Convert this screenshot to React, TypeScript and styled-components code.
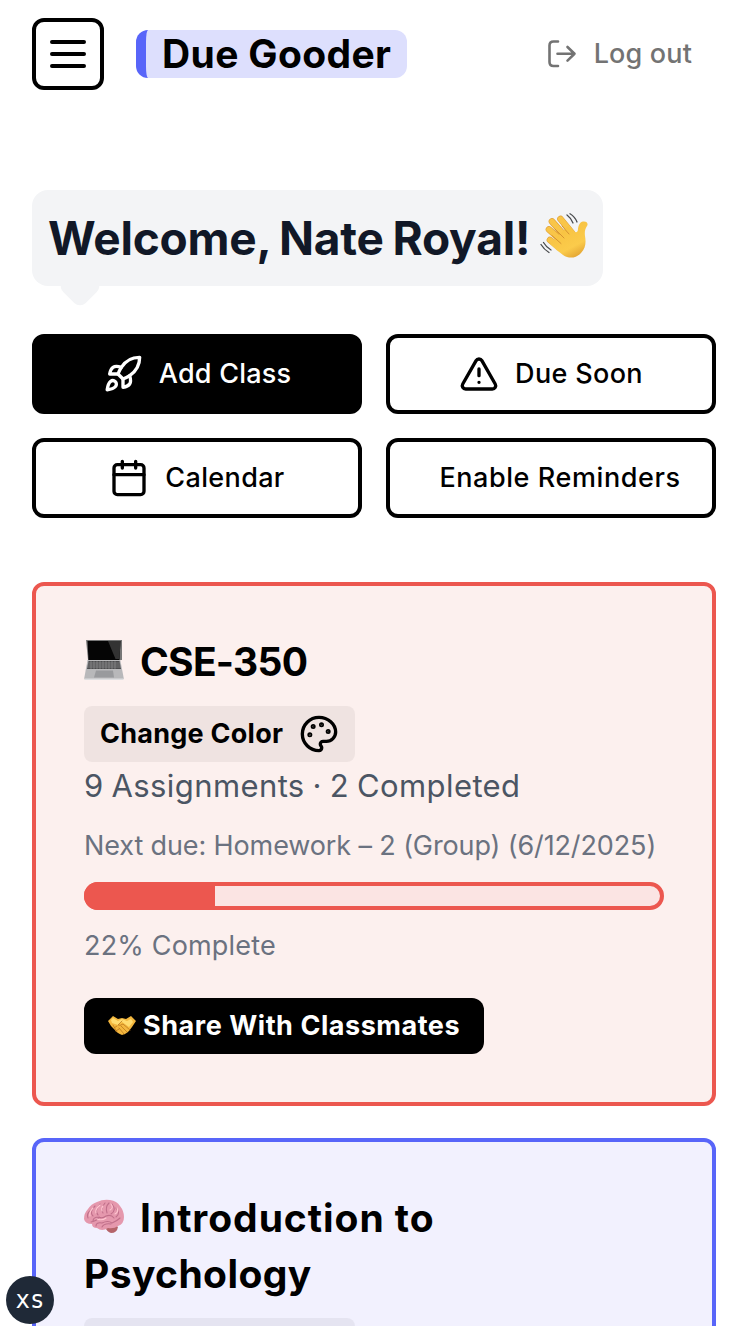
import React from "react";
import styled, { createGlobalStyle } from "styled-components";

const GlobalStyle = createGlobalStyle`
  *, *::before, *::after { box-sizing: border-box; }
  html, body { margin: 0; padding: 0; background: #fff; }
  body { font-family: Inter, "Liberation Sans", sans-serif; color: #000; }
  button { font-family: inherit; margin: 0; cursor: pointer; }
  h1, h2, p { margin: 0; }
  svg { display: block; flex: none; }
`;

const Page = styled.div`
  position: relative;
  height: 1326px;
  overflow: hidden;
  padding: 18px 28px 0 32px;
`;

const Header = styled.header`
  display: flex;
  align-items: center;
  height: 72px;
`;

const MenuButton = styled.button`
  width: 72px;
  height: 72px;
  border: 4px solid #000;
  border-radius: 12px;
  background: #fff;
  display: flex;
  align-items: center;
  justify-content: center;
  padding: 0;
`;

const Brand = styled.div`
  margin-left: 32px;
  width: 271px;
  height: 48px;
  border-radius: 12px;
  border-left: 10px solid #5865f9;
  background: #dddffd;
  padding-left: 16px;
  font-size: 39px;
  font-weight: 700;
  line-height: 47px;
  white-space: nowrap;
`;

const LogoutButton = styled.button`
  margin-left: auto;
  margin-right: 24px;
  border: 0;
  padding: 0;
  background: none;
  color: #737373;
  display: flex;
  align-items: center;
  gap: 17px;
  font-size: 27px;
  font-weight: 500;
  line-height: 40px;
`;

const Label = styled.span<{ $spacing?: number; $words?: number }>`
  letter-spacing: ${(p) => p.$spacing ?? 0}px;
  word-spacing: ${(p) => p.$words ?? 0}px;
  white-space: nowrap;
`;

const Bubble = styled.div`
  position: relative;
  margin-top: 100px;
  width: 571px;
  height: 96px;
  border-radius: 16px;
  background: #f3f4f6;
  padding: 0 15px 0 16px;
  display: flex;
  align-items: center;
  justify-content: space-between;

  &::after {
    content: "";
    position: absolute;
    left: 32px;
    bottom: -16px;
    width: 32px;
    height: 32px;
    border-radius: 8px;
    background: #f3f4f6;
    transform: rotate(45deg);
  }

  > svg {
    margin-bottom: 3px;
  }
`;

const Greeting = styled.h1`
  color: #111827;
  font-size: 46px;
  font-weight: 700;
  line-height: 56px;
`;

const Actions = styled.div`
  margin-top: 48px;
  display: grid;
  grid-template-columns: 1fr 1fr;
  gap: 24px;
`;

const ActionButton = styled.button<{ $filled?: boolean; $indent?: boolean }>`
  height: 80px;
  border: 4px solid #000;
  border-radius: 12px;
  background: ${(p) => (p.$filled ? "#000" : "#fff")};
  color: ${(p) => (p.$filled ? "#fff" : "#000")};
  display: flex;
  align-items: center;
  justify-content: center;
  gap: 16px;
  padding: 0 0 0 ${(p) => (p.$indent ? 18 : 0)}px;
  font-size: 27px;
  font-weight: 500;

  ${Label} {
    margin-bottom: 2px;
  }
`;

const Courses = styled.main`
  margin-top: 64px;
  display: flex;
  flex-direction: column;
  gap: 32px;
`;

const Card = styled.section<{ $accent: string; $tint: string }>`
  border: 4px solid ${(p) => p.$accent};
  border-radius: 12px;
  background: ${(p) => p.$tint};
  padding: 48px;
  display: flex;
  flex-direction: column;
  align-items: flex-start;
`;

const CourseTitle = styled.h2`
  font-size: 39px;
  font-weight: 700;
  line-height: 56px;
  margin-bottom: 16px;

  svg {
    display: inline-block;
    vertical-align: -4px;
    margin-right: 16px;
  }
`;

const ColorButton = styled.button`
  width: 271px;
  height: 56px;
  border: 0;
  border-radius: 8px;
  background: rgba(0, 0, 0, 0.05);
  display: flex;
  align-items: center;
  justify-content: space-between;
  padding: 0 16px;
  font-size: 27px;
  font-weight: 700;
  color: #000;

  ${Label} {
    margin-bottom: 2px;
  }
`;

const Summary = styled.p`
  color: #4b5563;
  font-size: 31px;
  line-height: 48px;
`;

const Detail = styled.p`
  color: #6b7280;
  font-size: 27px;
  line-height: 40px;
  margin: 16px 0;
`;

const Track = styled.div<{ $accent: string }>`
  align-self: stretch;
  height: 28px;
  border: 4px solid ${(p) => p.$accent};
  border-radius: 14px;
  background: #fbe4e3;
`;

/* The fill covers the track's own border so that its rounded end is solid. */
const Fill = styled.div<{ $accent: string }>`
  height: 28px;
  margin: -4px 0 0 -4px;
  border-radius: 14px 0 0 14px;
  background: ${(p) => p.$accent};
`;

const ShareButton = styled.button`
  margin-top: 16px;
  width: 400px;
  height: 56px;
  border: 0;
  border-radius: 12px;
  background: #000;
  color: #fff;
  display: flex;
  align-items: center;
  gap: 7px;
  padding: 0 24px;
  font-size: 27px;
  font-weight: 700;

  ${Label} {
    margin-bottom: 2px;
  }
`;

const SizeBadge = styled.div`
  position: absolute;
  left: 6px;
  top: 1276px;
  width: 48px;
  height: 48px;
  border-radius: 50%;
  background: #1f2937;
  color: #fff;
  display: flex;
  align-items: center;
  justify-content: center;
  font: 24px/1 "DejaVu Sans Mono", monospace;
`;

const Icon = ({ children }: { children: React.ReactNode }) => (
  <svg width="40" height="40" viewBox="0 0 24 24" fill="none" stroke="currentColor" strokeWidth="2" strokeLinecap="round" strokeLinejoin="round">
    {children}
  </svg>
);

const MenuIcon = () => (
  <svg width="40" height="32" fill="none" stroke="#000" strokeWidth="4" strokeLinecap="round">
    <path d="M4 4H36M4 16H36M4 28H36" />
  </svg>
);

const LogoutIcon = () => (
  <svg width="30" height="30" fill="none" stroke="currentColor" strokeWidth="2.6" strokeLinecap="round" strokeLinejoin="round">
    <path d="M11 2.500H6.500Q2.500 2.500 2.500 6.500V23Q2.500 27 6.500 27H11M10.500 14.800H27.500M20.500 8L27.500 14.800L20.500 21.600" />
  </svg>
);

const RocketIcon = () => (
  <Icon>
    <path d="M4.500 16.500c-1.500 1.260-2 5-2 5s3.740-.5 5-2c.71-.84.7-2.130-.09-2.910a2.180 2.180 0 0 0-2.910-.09z" />
    <path d="m12 15-3-3a22 22 0 0 1 2-3.950A12.880 12.880 0 0 1 22 2c0 2.720-.78 7.500-6 11a22.350 22.350 0 0 1-4 2z" />
    <path d="M9 12H4s.55-3.030 2-4c1.620-1.080 5 0 5 0M12 15v5s3.030-.55 4-2c1.080-1.620 0-5 0-5" />
  </Icon>
);

const AlertIcon = () => (
  <Icon>
    <path d="m21.730 18-8-14a2 2 0 0 0-3.480 0l-8 14A2 2 0 0 0 4 21h16a2 2 0 0 0 1.730-3M12 9v4M12 17h.01" />
  </Icon>
);

const CalendarIcon = () => (
  <Icon>
    <rect x="3" y="4" width="18" height="18" rx="2" />
    <path d="M8 2v4M16 2v4M3 10h18" />
  </Icon>
);

const PaletteIcon = () => (
  <Icon>
    <circle cx="13.500" cy="6.500" r=".5" fill="currentColor" />
    <circle cx="17.500" cy="10.500" r=".5" fill="currentColor" />
    <circle cx="8.500" cy="7.500" r=".5" fill="currentColor" />
    <circle cx="6.500" cy="12.500" r=".5" fill="currentColor" />
    <path d="M12 2C6.500 2 2 6.500 2 12s4.500 10 10 10c.926 0 1.648-.746 1.648-1.688 0-.437-.18-.835-.437-1.125-.29-.289-.438-.652-.438-1.125a1.640 1.640 0 0 1 1.668-1.668h1.996c3.051 0 5.555-2.503 5.555-5.554C21.965 6.012 17.461 2 12 2z" />
  </Icon>
);

const WaveEmoji = () => (
  <svg width="48" height="48" viewBox="0 0 48 48" fill="none">
    <defs>
      <linearGradient id="hand" x1="14" y1="6" x2="36" y2="48" gradientUnits="userSpaceOnUse">
        <stop stopColor="#f5bd3c" />
        <stop offset=".7" stopColor="#fbcb4b" />
        <stop offset="1" stopColor="#dc9a2c" />
      </linearGradient>
    </defs>
    <g stroke="#e0a136" strokeLinecap="round" strokeWidth="6.600">
      <path d="M12 8.500 24 22M20.500 6 32 20M9 16.500 22 28M10 27 20 35" />
    </g>
    <g stroke="#f9c548" strokeLinecap="round" strokeWidth="5.400">
      <path d="M12 8.500 25 23M20.500 6 33 21M9 16.500 23 29M10 27 22 36" />
    </g>
    <path d="M19 22 28 13l7 6c2 1 3-1 3-3 .5-4 2-7 5-7.500 4-.5 5.500 2 4 4.500-2 3-2.500 6-2 10 1 6 1 12-4 17-5 5.500-12 6-18 2-4-3-9-7-13-11z" fill="url(#hand)" />
    <path d="m15 16 9 9M12 22.500l9 8M22 13l7 8" stroke="#d69331" strokeLinecap="round" />
    <path d="M27 2q4 3 6 8M30 .8q5 3 7 8.200M3.500 29.500q3 5 7.500 7.500M1 31.500q3 5 8 8" stroke="#494b4e" strokeWidth="1.300" strokeLinecap="round" />
  </svg>
);

const LaptopEmoji = () => (
  <svg width="40" height="40" viewBox="0 0 40 40">
    <path d="M2 0h36v20H4z" fill="#777" />
    <path d="M3.500 1h33l-1 19h-31z" fill="#050505" />
    <path d="M24 1h12.500l-1 18h-4z" fill="#333" />
    <path d="M3.500 20h32.800l3.500 18.500-1 1.200H1L.2 38.500z" fill="#b8b8ba" />
    <path d="M4.500 21h31l1.500 8H3z" fill="#4c4c4f" />
    <path d="M4 23h32M3.500 25h33M3 27h34M7 21v8m3-8v8m3-8v8m3-8v8m3-8v8m3-8v8m3-8v8m3-8v8m3-8v8" stroke="#a4a4a7" strokeWidth=".5" />
    <path d="M12 30.500h17l1 7H10z" fill="#999a9d" />
    <path d="M.2 38.500h39.600l-.8 1.500H1z" fill="#dedee0" />
  </svg>
);

const HandshakeEmoji = () => (
  <svg width="28" height="20" viewBox="0 0 28 20" fill="none">
    <path d="M0 5 5 0l5 3 4-1 4 1 5-3 5 5-4 6-3 4c-2 2-4 3-7 4-3-1-6-3-8-6l-3-3z" fill="#f3b73e" />
    <path d="m5 2 5 3 4-2 5 2 4-2 2 3-4 5-7-5-4 3-6-2-1-3z" fill="#ffdc70" />
    <path d="m14 5-4 4q2 1 5-1l7 6M13 10l6 6M11 12l5 6M5 9l4 7M6 12l3-2M8 15l3-2" stroke="#bd7a20" strokeWidth=".8" strokeLinecap="round" />
  </svg>
);

const BrainEmoji = () => (
  <svg width="40" height="40" viewBox="0 -4 40 40" fill="none">
    <path d="M24 27q7-4 10 0-1 6-7 6-4-1-6-6z" fill="#b5646a" />
    <path d="M0 19Q0 13 4 9 7 4 13 2q6-3 13-2 7 1 10 6 4 5 4 11 0 7-6 9-4 3-10 2-6 4-11 0-5 0-5-4-7 0-8-5z" fill="#e598ad" />
    <path d="M4 18Q2 14 7 10M9 16Q5 12 11 6M14 15Q10 11 16 4M19 13Q16 9 21 3M23 13Q21 7 25 3M27 14Q33 10 28 4M32 17Q37 13 32 8M9 21q0-4 6-4 3 2 7-1 5-2 8 2M12 26q0-4 6-3 6-3 10 0 5-2 8-5M7 22q6-1 8-5M18 27q2-4 9-3" stroke="#c06f8a" strokeWidth="1.100" strokeLinecap="round" />
    <path d="M6 16Q5 12 9 8M12 13q-1-4 4-8M19 6q-2 2-1 5M26 10q4-2 1-6M31 14q4-2 2-6M13 19q5 2 9-1" stroke="#ffc5d0" strokeWidth="1.100" strokeLinecap="round" />
  </svg>
);

const RED = "#ec574f";
const BLUE = "#5865f9";

export default function App() {
  return (
    <Page>
      <GlobalStyle />
      <Header>
        <MenuButton aria-label="Menu"><MenuIcon /></MenuButton>
        <Brand><Label $spacing={0.35}>Due Gooder</Label></Brand>
        <LogoutButton><LogoutIcon /><Label $spacing={0.15}>Log out</Label></LogoutButton>
      </Header>

      <Bubble>
        <Greeting><Label $spacing={-0.2} $words={-2}>Welcome, Nate Royal!</Label></Greeting>
        <WaveEmoji />
      </Bubble>

      <Actions>
        <ActionButton $filled><RocketIcon /><Label $spacing={0.2}>Add Class</Label></ActionButton>
        <ActionButton><AlertIcon /><Label $spacing={0.35}>Due Soon</Label></ActionButton>
        <ActionButton><CalendarIcon /><Label $spacing={0.35}>Calendar</Label></ActionButton>
        <ActionButton $indent><Label $spacing={0.58}>Enable Reminders</Label></ActionButton>
      </Actions>

      <Courses>
        <Card $accent={RED} $tint="#fcf0ee">
          <CourseTitle><LaptopEmoji /><Label $spacing={-0.75}>CSE-350</Label></CourseTitle>
          <ColorButton><Label $spacing={0.25}>Change Color</Label><PaletteIcon /></ColorButton>
          <Summary><Label $spacing={0.4} $words={-1.2}>9 Assignments · 2 Completed</Label></Summary>
          <Detail><Label $spacing={-0.12}>Next due: Homework – 2 (Group) (6/12/2025)</Label></Detail>
          <Track $accent={RED}><Fill $accent={RED} style={{ width: `calc(${(2 / 9) * 100}% + 4px)` }} /></Track>
          <Detail><Label $spacing={0.18}>22% Complete</Label></Detail>
          <ShareButton><HandshakeEmoji /><Label $spacing={0.54}>Share With Classmates</Label></ShareButton>
        </Card>

        <Card $accent={BLUE} $tint="#f2f1fe">
          <CourseTitle><BrainEmoji /><Label $spacing={0.95}>Introduction to</Label><br /><Label $spacing={0.4}>Psychology</Label></CourseTitle>
          <ColorButton aria-label="Change color" />
        </Card>
      </Courses>

      <SizeBadge>xs</SizeBadge>
    </Page>
  );
}
